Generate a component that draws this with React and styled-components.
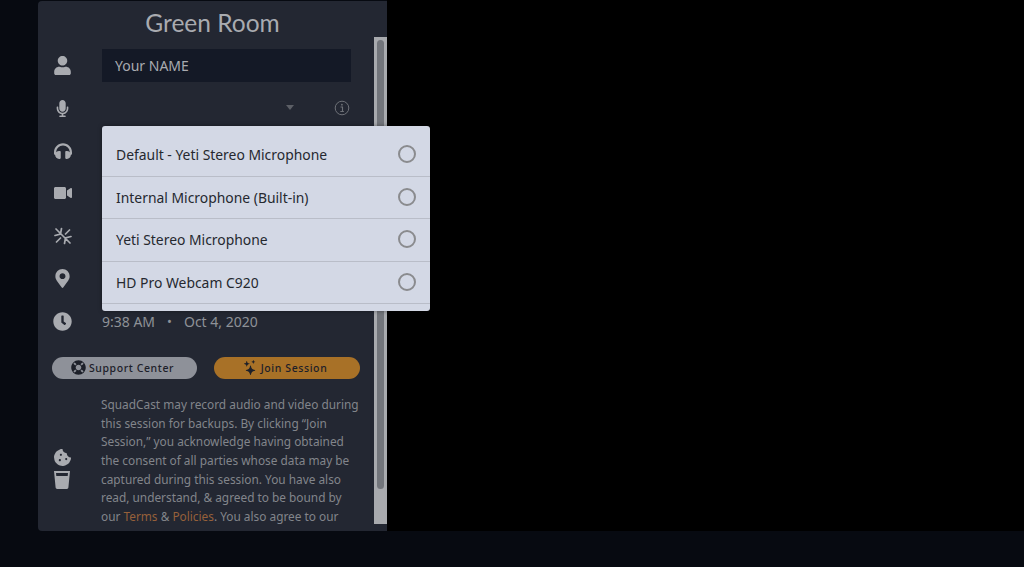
import React from 'react';
import styled, { createGlobalStyle } from 'styled-components';
import { FaUser, FaMicrophone, FaHeadphones, FaVideo, FaMapMarkerAlt, FaClock, FaCookieBite, FaLifeRing } from 'react-icons/fa';
import { BsStars } from 'react-icons/bs';

const Global = createGlobalStyle`
  html, body { margin: 0; padding: 0; height: 100%; background: #070a11; overflow: hidden; }
  #root { height: 100%; }
`;

const Page = styled.div`
  position: relative;
  width: 1024px;
  height: 567px;
  background: #070a11;
  overflow: hidden;
`;
const Stage = styled.div`
  display: flex;
  height: 531px;
  padding-left: 38px;
  box-sizing: border-box;
`;
const Panel = styled.section`
  position: relative;
  width: 349px;
  height: 530px;
  margin-top: 1px;
  flex: none;
  background: #232732;
  border-radius: 4px 0 0 4px;
  overflow: hidden;
  font-family: "Noto Sans", sans-serif;
  color: #a9abb0;
`;
const Video = styled.div`
  flex: 1;
  background: #000;
`;
const Title = styled.h1`
  margin: 0;
  height: 28px;
  padding-top: 8px;
  box-sizing: content-box;
  text-align: center;
  font-family: Lato, sans-serif;
  font-weight: 400;
  font-size: 24.5px;
  line-height: 28px;
  color: #a9abb0;
`;
const Track = styled.div`
  position: absolute;
  top: 36px;
  right: 0;
  bottom: 7px;
  width: 13px;
  background: #a8aaae;
`;
const Thumb = styled.div`
  width: 7px;
  height: 449px;
  margin: 3px 3px 0;
  background: #72757b;
  border-radius: 4px;
`;
const Body = styled.div`
  display: grid;
  grid-template-columns: 64px 1fr;
`;
const IconCol = styled.div`
  display: flex;
  flex-direction: column;
  align-items: center;
  padding: 7px 0 0 14.5px;
  width: 20px;
  box-sizing: content-box;
  color: #a9abb0;
  font-size: 19px;
`;
const IconSlot = styled.div`
  height: 42.7px;
  width: 20px;
  display: flex;
  align-items: center;
  justify-content: center;
`;
const Main = styled.div`
  display: flex;
  flex-direction: column;
`;
const NameField = styled.div`
  width: 249px;
  height: 33px;
  margin-top: 12px;
  background: #141926;
  padding-left: 13px;
  box-sizing: border-box;
  display: flex;
  align-items: center;
  font-size: 14px;
  color: #a9abb0;
`;
const SelectRow = styled.div`
  height: 50px;
  width: 249px;
  position: relative;
`;
const Caret = styled.span`
  position: absolute;
  left: 184px;
  top: 23px;
  width: 0;
  height: 0;
  border-left: 4.5px solid transparent;
  border-right: 4.5px solid transparent;
  border-top: 5px solid #5c5f66;
`;
const InfoWrap = styled.span`
  position: absolute;
  left: 232px;
  top: 18px;
  display: flex;
  color: #6e7177;
`;
const ClockText = styled.div`
  margin-top: 173px;
  height: 32px;
  display: flex;
  align-items: center;
  gap: 12px;
  font-size: 14px;
  color: #8e9197;
  white-space: nowrap;
`;
const Dot = styled.span`
  font-size: 13px;
`;
const Menu = styled.div`
  position: absolute;
  left: 102px;
  top: 126px;
  width: 328px;
  height: 185px;
  background: #d3d8e5;
  border-radius: 3px;
  box-sizing: border-box;
  padding-top: 8px;
  z-index: 3;
  box-shadow: 0 0 4px rgba(0,0,0,.4);
  font-family: "Noto Sans", sans-serif;
`;
const MenuRow = styled.div`
  height: 42.5px;
  box-sizing: border-box;
  display: flex;
  align-items: center;
  justify-content: space-between;
  padding: 0 14px;
  border-bottom: 1px solid #b9bdc8;
  font-size: 13.9px;
  color: #25282f;
`;
const Radio = styled.span`
  width: 18px;
  height: 18px;
  box-sizing: border-box;
  border: 2px solid #8a8b8e;
  border-radius: 50%;
  margin-top: -1px;
`;
const Buttons = styled.div`
  display: flex;
  gap: 17px;
  margin-top: 14px;
  padding-left: 14px;
`;
const Pill = styled.button`
  width: ${p => p.$w}px;
  height: 22px;
  border: 0;
  border-radius: 11px;
  background: ${p => p.$bg};
  color: #1d2029;
  display: flex;
  align-items: center;
  justify-content: center;
  gap: 3px;
  padding: 0 4px 0 0;
  font-family: "Noto Sans", sans-serif;
  font-size: 10.5px;
  font-weight: 500;
  letter-spacing: .6px;
`;
const Lower = styled.div`
  display: grid;
  grid-template-columns: 63px 257px;
  padding-top: 16px;
`;
const LowerIcons = styled.div`
  display: flex;
  flex-direction: column;
  align-items: center;
  padding: 54px 0 0 14px;
  width: 20px;
  box-sizing: content-box;
  gap: 5px;
  color: #a9abb0;
`;
const Legal = styled.p`
  margin: 0;
  font-size: 11.85px;
  line-height: 18.7px;
  color: #82858b;
  white-space: nowrap;
`;
const Link = styled.span`
  color: #96603a;
`;

const Info = () => (
  <svg width="16" height="16" viewBox="0 0 16 16" fill="none" stroke="currentColor">
    <circle cx="8" cy="8" r="6.8" strokeWidth="1" />
    <path d="M6.5 7h2v4.2M6.3 11.5h3.6" strokeWidth="1.1" />
    <circle cx="7.9" cy="4.7" r=".9" fill="currentColor" stroke="none" />
  </svg>
);
const Burst = () => (
  <svg width="18" height="18" viewBox="0 0 18 18" fill="none" stroke="currentColor" strokeWidth="1.7" strokeLinecap="round">
    <path d="M2 2l14 14M1 8.5L6.5 7L7.5 1.5M17 9.5L11.5 11L10.5 16.5M15.5 3l-4 4M2.5 15l4-4" />
  </svg>
);
const Glass = () => (
  <svg width="16" height="18" viewBox="0 0 16 18">
    <path d="M0 0h16l-1.6 16.6a1.5 1.5 0 0 1-1.5 1.4H3.1a1.5 1.5 0 0 1-1.5-1.4z" fill="currentColor" />
    <path d="M2 2h12l-.3 3H2.3z" fill="#232732" />
  </svg>
);

const devices = ['Default - Yeti Stereo Microphone', 'Internal Microphone (Built-in)', 'Yeti Stereo Microphone', 'HD Pro Webcam C920'];

export default function App() {
  return (
    <Page>
      <Global />
      <Stage>
        <Panel>
          <Title>Green Room</Title>
          <Track><Thumb /></Track>
          <Body>
            <IconCol>
              <IconSlot><FaUser /></IconSlot>
              <IconSlot><FaMicrophone size={17} /></IconSlot>
              <IconSlot><FaHeadphones size={18} /></IconSlot>
              <IconSlot><FaVideo size={18} /></IconSlot>
              <IconSlot><Burst /></IconSlot>
              <IconSlot><FaMapMarkerAlt /></IconSlot>
              <IconSlot><FaClock /></IconSlot>
            </IconCol>
            <Main>
              <NameField>Your NAME</NameField>
              <SelectRow><Caret /><InfoWrap><Info /></InfoWrap></SelectRow>
              <ClockText>9:38 AM <Dot>•</Dot> Oct 4, 2020</ClockText>
            </Main>
          </Body>
          <Buttons>
            <Pill $w={145} $bg="#8e9199"><FaLifeRing size={15} />Support Center</Pill>
            <Pill $w={146} $bg="#a87127"><BsStars size={15} />Join Session</Pill>
          </Buttons>
          <Lower>
            <LowerIcons>
              <FaCookieBite size={17} />
              <Glass />
            </LowerIcons>
            <Legal>
              SquadCast may record audio and video during<br />
              this session for backups. By clicking “Join<br />
              Session,” you acknowledge having obtained<br />
              the consent of all parties whose data may be<br />
              captured during this session. You have also<br />
              read, understand, &amp; agreed to be bound by<br />
              our <Link>Terms</Link> &amp; <Link>Policies</Link>. You also agree to our
            </Legal>
          </Lower>
        </Panel>
        <Video />
      </Stage>
      <Menu>
        {devices.map(d => <MenuRow key={d}>{d}<Radio /></MenuRow>)}
      </Menu>
    </Page>
  );
}
